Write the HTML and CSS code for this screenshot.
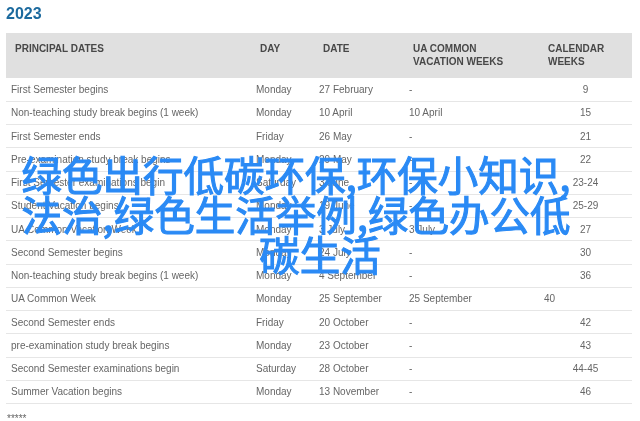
FILE: index.html
```html
<!DOCTYPE html>
<html lang="zh">
<head>
<meta charset="utf-8">
<title>2023</title>
<link rel="stylesheet" href="styles.css">
</head>
<body>
<main class="page">
  <h2 class="year">2023</h2>
  <table class="dates">
    <colgroup><col class="c1"><col class="c2"><col class="c3"><col class="c4"><col class="c5"></colgroup>
    <thead>
      <tr><th>PRINCIPAL DATES</th><th>DAY</th><th>DATE</th><th>UA COMMON<br>VACATION WEEKS</th><th>CALENDAR<br>WEEKS</th></tr>
    </thead>
    <tbody>
      <tr><td>First Semester begins</td><td>Monday</td><td>27 February</td><td>-</td><td class="wk">9</td></tr>
      <tr><td>Non-teaching study break begins (1 week)</td><td>Monday</td><td>10 April</td><td>10 April</td><td class="wk">15</td></tr>
      <tr><td>First Semester ends</td><td>Friday</td><td>26 May</td><td>-</td><td class="wk">21</td></tr>
      <tr><td>Pre-examination study break begins</td><td>Monday</td><td>29 May</td><td>-</td><td class="wk">22</td></tr>
      <tr><td>First Semester examinations begin</td><td>Saturday</td><td>3 June</td><td>-</td><td class="wk">23-24</td></tr>
      <tr><td>Student Vacation begins</td><td>Monday</td><td>19 June</td><td>-</td><td class="wk">25-29</td></tr>
      <tr><td>UA Common Vacation Week</td><td>Monday</td><td>3 July</td><td>3 July</td><td class="wk">27</td></tr>
      <tr><td>Second Semester begins</td><td>Monday</td><td>24 July</td><td>-</td><td class="wk">30</td></tr>
      <tr><td>Non-teaching study break begins (1 week)</td><td>Monday</td><td>4 September</td><td>-</td><td class="wk">36</td></tr>
      <tr><td>UA Common Week</td><td>Monday</td><td>25 September</td><td>25 September</td><td>40</td></tr>
      <tr><td>Second Semester ends</td><td>Friday</td><td>20 October</td><td>-</td><td class="wk">42</td></tr>
      <tr><td>pre-examination study break begins</td><td>Monday</td><td>23 October</td><td>-</td><td class="wk">43</td></tr>
      <tr><td>Second Semester examinations begin</td><td>Saturday</td><td>28 October</td><td>-</td><td class="wk">44-45</td></tr>
      <tr><td>Summer Vacation begins</td><td>Monday</td><td>13 November</td><td>-</td><td class="wk">46</td></tr>
    </tbody>
  </table>
  <p class="note">*****</p>
  <h1 class="overlay">
    <span class="line wide">绿色出行低碳环保,环保小知识,</span>
    <span class="line wide">法治,绿色生活举例,绿色办公低</span>
    <span class="line">碳生活</span>
  </h1>
</main>
</body>
</html>
```

FILE: styles.css
```css
html, body {
  margin: 0;
  padding: 0;
  background: #fff;
  overflow: hidden;
}
.page {
  position: relative;
  height: 421px;
  padding: 0 8px 0 6px;
  box-sizing: border-box;
  overflow: hidden;
  font-family: "Liberation Sans", Arial, sans-serif;
  color: #666;
  filter: blur(0.3px);
}
.year {
  margin: 0;
  padding-top: 6px;
  height: 33px;
  box-sizing: border-box;
  font-size: 16px;
  line-height: 16px;
  font-weight: 700;
  color: #1c6a9e;
}
.dates {
  width: 626px;
  table-layout: fixed;
  border-collapse: collapse;
  font-size: 10px;
}
.c1 { width: 245px; }
.c2 { width: 63px; }
.c3 { width: 90px; }
.c4 { width: 135px; }
.c5 { width: 93px; }
.dates th {
  height: 45px;
  box-sizing: border-box;
  padding: 9px 0 0 9px;
  vertical-align: top;
  text-align: left;
  font-size: 10px;
  line-height: 13px;
  font-weight: 700;
  color: #484848;
  background: #e0e0e0;
}
.dates td {
  height: 23.25px;
  box-sizing: border-box;
  padding: 0 0 0 5px;
  line-height: 13px;
  border-bottom: 1px solid #e6e6e6;
  white-space: nowrap;
}
.dates td.wk {
  padding-left: 0;
  text-align: center;
}
.note {
  margin: 0;
  padding: 9px 0 0 1px;
  font-size: 10px;
  line-height: 12px;
}
.overlay {
  position: absolute;
  top: 154px;
  left: 0;
  width: 640px;
  margin: 0;
  font-family: "Noto Sans CJK SC", sans-serif;
  font-size: 40.5px;
  line-height: 40px;
  font-weight: 400;
  -webkit-text-stroke: 1.1px #2a8af5;
  color: #2a8af5;
  text-align: center;
}
.line {
  display: block;
  white-space: nowrap;
}
.wide {
  padding-right: 48px;
}
```
